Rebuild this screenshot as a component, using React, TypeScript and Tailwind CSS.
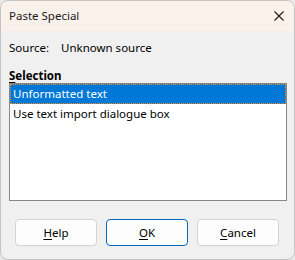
const font = { fontFamily: '"Noto Sans", "Segoe UI", sans-serif' };

function Button({ label, hot, primary }: { label: string; hot: string; primary?: boolean }) {
  const rest = label.slice(hot.length);
  return (
    <button
      className={`w-[82px] h-[27px] rounded-[4px] bg-[#fdfdfd] text-[11.5px] text-black flex items-center justify-center ${
        primary ? 'border border-[#0067c0]' : 'border border-[#d3d3d3]'
      }`}
    >
      <span className="underline underline-offset-2">{hot}</span>
      {rest}
    </button>
  );
}

export default function App() {
  return (
    <div className="w-[295px] h-[260px] bg-[#e9e9e9]" style={font}>
      <div className="w-[295px] h-[260px] rounded-[8px] border border-[#c4c4c4] bg-[#f0f0f0] overflow-hidden flex flex-col">
        {/* Title bar */}
        <div className="h-[30px] bg-[#faf1ea] flex items-center justify-between pl-[8px] pr-[10px]">
          <span className="text-[11.5px] text-[#1a1a1a]">Paste Special</span>
          <svg width="10" height="10" viewBox="0 0 10 10" className="mt-[-1px]">
            <path d="M0.5 0.5 L9.5 9.5 M9.5 0.5 L0.5 9.5" stroke="#1a1a1a" strokeWidth="1.1" />
          </svg>
        </div>

        {/* Body */}
        <div className="flex flex-col px-[8px] pt-[9px] text-[11.5px] text-black">
          <div className="flex h-[16px] items-center">
            <span className="w-[52px]">Source:</span>
            <span>Unknown source</span>
          </div>

          <div className="mt-[12px] h-[15px] flex items-center font-bold">
            <span className="underline underline-offset-2">S</span>election
          </div>

          <div className="mt-[0px] w-[278px] h-[118px] border border-[#828790] bg-white">
            <div className="h-[20px] bg-[#0078d7] text-white border border-dotted border-[#f08b1c] flex items-center pl-[2px]">
              Unformatted text
            </div>
            <div className="h-[20px] flex items-center pl-[3px]">Use text import dialogue box</div>
          </div>

          <div className="mt-[18px] flex gap-[9px] pl-[6px]">
            <Button label="Help" hot="H" />
            <Button label="OK" hot="O" primary />
            <Button label="Cancel" hot="C" />
          </div>
        </div>
      </div>
    </div>
  );
}
